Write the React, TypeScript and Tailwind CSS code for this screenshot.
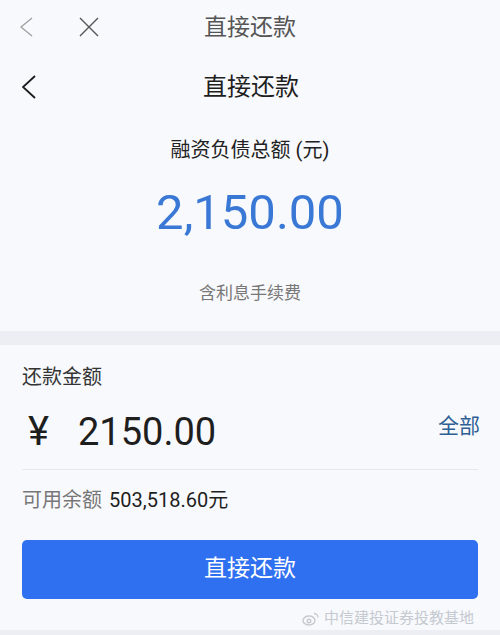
import React from 'react';

const font = { fontFamily: 'Roboto, "Noto Sans CJK SC", sans-serif' };

function Chevron({ className, w, h, sw }: { className: string; w: number; h: number; sw: number }) {
  return (
    <svg width={w} height={h} viewBox={`0 0 ${w} ${h}`} className={className} fill="none">
      <path d={`M${w - 1} 1 L1 ${h / 2} L${w - 1} ${h - 1}`} stroke="currentColor" strokeWidth={sw} strokeLinejoin="miter" />
    </svg>
  );
}

export default function App() {
  return (
    <div className="w-[500px] h-[635px] overflow-hidden bg-[#f8f9fc] flex flex-col" style={font}>
      {/* outer nav */}
      <div className="h-[54px] grid grid-cols-[1fr_auto_1fr] items-center px-5">
        <div className="flex items-center gap-[46px]">
          <Chevron className="text-[#a0a0a0]" w={13} h={20} sw={1.3} />
          <svg width="20" height="20" viewBox="0 0 20 20" className="text-[#555]">
            <path d="M1 1 L19 19 M19 1 L1 19" stroke="currentColor" strokeWidth="1.4" />
          </svg>
        </div>
        <div className="text-[23px] text-[#555] leading-none">直接还款</div>
        <div />
      </div>

      {/* page nav */}
      <div className="h-[66px] grid grid-cols-[1fr_auto_1fr] items-center pl-[22px] pr-5">
        <Chevron className="text-[#1a1a1a]" w={14} h={24} sw={1.8} />
        <div className="text-[24px] text-[#1e1e1e] leading-none">直接还款</div>
        <div />
      </div>

      {/* debt summary */}
      <div className="flex flex-col items-center pt-4 pb-[26px]">
        <div className="text-[20px] leading-[28px] text-[#222]">融资负债总额 (元)</div>
        <div className="mt-[19px] text-[49px] leading-[60px] text-[#3a78d6]">2,150.00</div>
        <div className="mt-[38px] text-[17px] leading-[24px] text-[#777]">含利息手续费</div>
      </div>

      <div className="h-[14px] bg-[#eceef3]" />

      {/* repay form */}
      <div className="flex-1 flex flex-col px-[22px] pt-[18px]">
        <div className="text-[20px] leading-[28px] text-[#333]">还款金额</div>
        <div className="mt-[16px] h-[50px] flex items-center justify-between">
          <div className="flex items-center text-[#1e1e1e]">
            <span className="text-[40px] leading-none ml-[6px] w-[50px]">¥</span>
            <span className="text-[38px] leading-none">2150.00</span>
          </div>
          <span className="text-[21px] text-[#2d5f95] -mt-[10px] mr-[-2px]">全部</span>
        </div>
        <div className="mt-[12px] h-px bg-[#e6e8ec]" />
        <div className="mt-[16px] text-[20px] leading-[28px] flex items-baseline">
          <span className="text-[#777]">可用余额</span>
          <span className="ml-[7px] text-[#1e1e1e]">503,518.60元</span>
        </div>
        <button className="mt-[26px] h-[59px] rounded-[5px] bg-[#2f70f0] text-white text-[23px] flex items-center justify-center">
          直接还款
        </button>
        <div className="flex-1 flex items-center justify-end pt-[8px] pr-[4px] gap-[4px] text-[#c5c9d0] text-[15px] leading-none">
          <svg width="18" height="14" viewBox="0 0 18 14" fill="none" stroke="currentColor" strokeWidth="1.4">
            <ellipse cx="7" cy="8.5" rx="6" ry="4.5" />
            <circle cx="7" cy="9" r="1.8" />
            <path d="M12 1.5 A4 4 0 0 1 16 5.5" />
          </svg>
          <span>中信建投证券投教基地</span>
        </div>
      </div>
      <div className="h-[5px] bg-[#eceef3]" />
    </div>
  );
}
